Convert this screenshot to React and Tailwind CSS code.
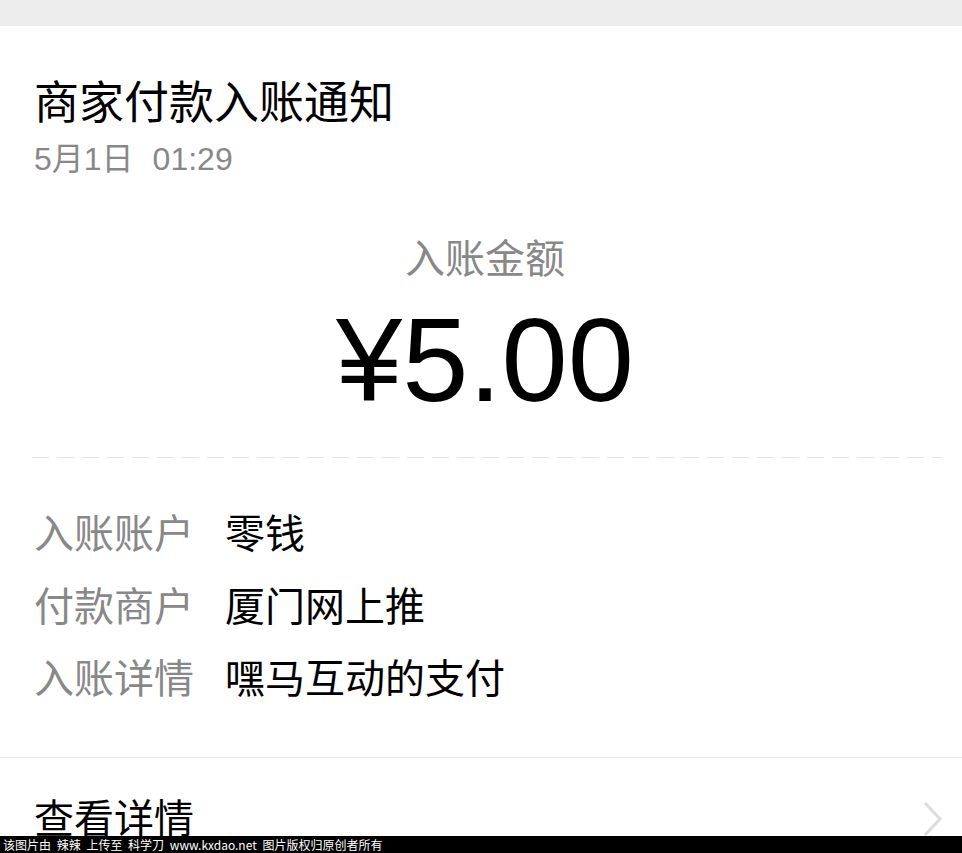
const font = "font-['Liberation_Sans','Noto_Sans_CJK_SC',sans-serif]"

// Label / value row in the detail list
const InfoRow = ({ label, value }) => (
  <div className="flex items-center h-[72.5px] text-[40px] leading-none">
    <span className="w-[191px] shrink-0 text-[#888888]">{label}</span>
    <span className="text-black">{value}</span>
  </div>
)

const App = () => {
  return (
    <div className={`${font} relative w-[962px] h-[853px] overflow-hidden bg-white`}>
      {/* top gray strip */}
      <div className="h-[26px] bg-[#ededed]" />

      {/* header */}
      <div className="px-[34px] pt-[55px]">
        <h1 className="text-[45px] leading-none text-black">商家付款入账通知</h1>
        <p className="mt-[17px] text-[32px] leading-none text-[#888888]">
          5月1日<span className="ml-[19px]">01:29</span>
        </p>
      </div>

      {/* amount */}
      <div className="flex flex-col items-center pl-[8px] pt-[64px]">
        <div className="text-[40px] leading-none text-[#888888]">入账金额</div>
        <div className="mt-[21px] text-[119px] leading-none text-black">¥5.00</div>
      </div>

      {/* dashed divider */}
      <div className="ml-[32px] mr-[20px] mt-[38px] h-px bg-[repeating-linear-gradient(to_right,#e3e3e3_0_17px,transparent_17px_25px)]" />

      {/* details */}
      <div className="px-[34px] pt-[40px]">
        <InfoRow label="入账账户" value="零钱" />
        <InfoRow label="付款商户" value="厦门网上推" />
        <InfoRow label="入账详情" value="嘿马互动的支付" />
      </div>

      <div className="mt-[41px] h-px bg-[#e5e5e5]" />

      {/* view details */}
      <div className="flex items-center justify-between pl-[34px] pr-[18px] pt-[41px]">
        <span className="text-[40px] leading-none text-black">查看详情</span>
        <svg width="22" height="38" viewBox="0 0 22 38" fill="none">
          <path d="M3 3 L18 19 L3 35" stroke="#dcdcdc" strokeWidth="3" />
        </svg>
      </div>

      {/* watermark bar */}
      <div className="absolute bottom-0 left-0 right-0 h-[17px] bg-black pl-[3px] flex items-center">
        <span className="text-[12px] leading-none text-white whitespace-pre [word-spacing:3px] font-['Noto_Sans_CJK_SC',sans-serif]">
          该图片由 辣辣 上传至 科学刀 www.kxdao.net 图片版权归原创者所有
        </span>
      </div>
    </div>
  )
}

export default App
